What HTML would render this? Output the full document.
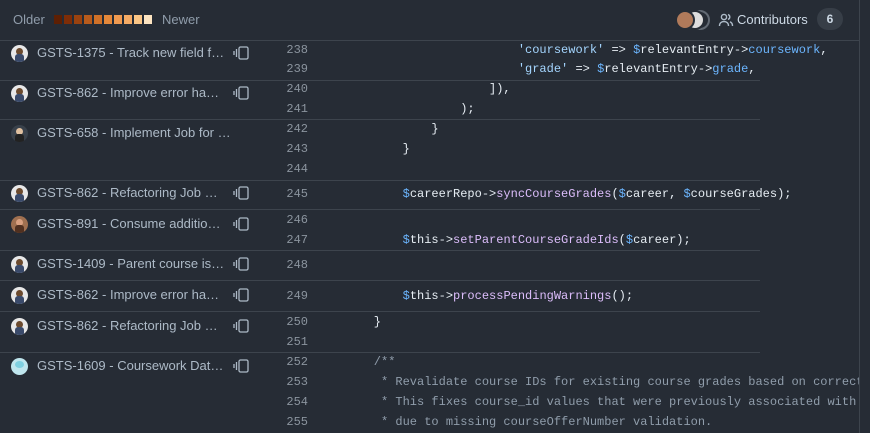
<!DOCTYPE html>
<html><head><meta charset="utf-8"><style>
*{margin:0;padding:0;box-sizing:border-box}
body{width:870px;height:433px;background:#262c35;overflow:hidden;position:relative;font-family:"Liberation Sans",sans-serif;color:#adbac7}
.abs{position:absolute}
.hdr{left:0;top:0;width:860px;height:41px;border-bottom:1px solid #3d444d}
.vl{left:859px;top:0;width:1px;height:433px;background:#3d444d}
.sq{position:absolute;top:15px;width:8px;height:9px}
.sep{position:absolute;left:0;width:760px;height:1px;background:#3d444d}
.bl{position:absolute;left:0;height:20px;font-size:13px;color:#adbac7;white-space:nowrap}
.av{position:absolute;left:11px;top:2px;width:17px;height:17px;border-radius:50%;background:#e8e8e8;overflow:hidden}
.av i{position:absolute;left:5px;top:3px;width:7px;height:7px;border-radius:50%;background:#6b4a2e}
.av b{position:absolute;left:4px;top:9px;width:9px;height:8px;background:#3a4a6a;border-radius:3px 3px 0 0}
.bt{position:absolute;left:37px;top:2px}
.ic{position:absolute;left:233px;top:3px}
.ln{position:absolute;left:262px;width:46px;text-align:right;font-family:"Liberation Mono",monospace;font-size:12px;color:#8b949e;height:20px;line-height:21px}
.cd{position:absolute;left:345px;font-family:"Liberation Mono",monospace;font-size:12px;white-space:pre;height:20px;line-height:21px;color:#e6edf3;width:514px;overflow:hidden}
.s{color:#a5d6ff}.v{color:#6cb6ff}.f{color:#dcbdfb}.c{color:#909dab}
</style></head><body>
<div class="abs hdr">
<span class="abs" style="left:13px;top:12px;font-size:13px;color:#909dab">Older</span>
<div class="sq" style="left:54px;background:#5d1f03"></div>
<div class="sq" style="left:64px;background:#7e2d07"></div>
<div class="sq" style="left:74px;background:#9a420f"></div>
<div class="sq" style="left:84px;background:#b85b1c"></div>
<div class="sq" style="left:94px;background:#d07128"></div>
<div class="sq" style="left:104px;background:#e5883a"></div>
<div class="sq" style="left:114px;background:#f09a50"></div>
<div class="sq" style="left:124px;background:#f5ab65"></div>
<div class="sq" style="left:134px;background:#fbc686"></div>
<div class="sq" style="left:144px;background:#fde4c1"></div>
<span class="abs" style="left:162px;top:12px;font-size:13px;color:#909dab">Newer</span>
<div class="abs" style="left:690px;top:10px;width:20px;height:20px;border-radius:50%;border:2px solid #8b949e;opacity:.6"></div>
<div class="abs" style="left:685px;top:10px;width:20px;height:20px;border-radius:50%;background:#ddd;border:2px solid #262c35"></div>
<div class="abs" style="left:675px;top:10px;width:20px;height:20px;border-radius:50%;background:#b07a5a;border:2px solid #262c35"></div>
<svg class="abs" style="left:718px;top:12px" width="16" height="16" viewBox="0 0 16 16" fill="none" stroke="#adbac7" stroke-width="1.4"><circle cx="6" cy="5" r="2.6"/><path d="M1.5 14c0-3 2-4.5 4.5-4.5S10.5 11 10.5 14"/><path d="M10 2.6a2.5 2.5 0 0 1 0 4.8M12 9.8c1.6.6 2.5 2 2.5 4.2"/></svg>
<span class="abs" style="left:737px;top:12px;font-size:13px;color:#cdd9e5">Contributors</span>
<div class="abs" style="left:817px;top:8px;width:26px;height:22px;border-radius:11px;background:#373e47;color:#cdd9e5;font-size:12px;font-weight:bold;text-align:center;line-height:22px">6</div>
</div>
<div class="vl abs"></div>

<div class="sep" style="top:80px"></div><div class="sep" style="top:119px"></div><div class="sep" style="top:180px"></div><div class="sep" style="top:209px"></div><div class="sep" style="top:250px"></div><div class="sep" style="top:280px"></div><div class="sep" style="top:311px"></div><div class="sep" style="top:352px"></div>

<div class="bl" style="top:43px"><div class="av"><i></i><b></b></div><span class="bt">GSTS-1375 - Track new field f…</span><svg class="ic" width="16" height="14" viewBox="0 0 16 14" fill="none" stroke="#adbac7" stroke-width="1.3"><path d="M1 5v4M3.5 3v8"/><rect x="6" y="1" width="9" height="12" rx="1.5"/></svg></div>
<div class="bl" style="top:83px"><div class="av"><i></i><b></b></div><span class="bt">GSTS-862 - Improve error ha…</span><svg class="ic" width="16" height="14" viewBox="0 0 16 14" fill="none" stroke="#adbac7" stroke-width="1.3"><path d="M1 5v4M3.5 3v8"/><rect x="6" y="1" width="9" height="12" rx="1.5"/></svg></div>
<div class="bl" style="top:123px"><div class="av" style="background:#39414b"><i style="background:#e0c0a0"></i><b style="background:#222"></b></div><span class="bt">GSTS-658 - Implement Job for …</span></div>
<div class="bl" style="top:183px"><div class="av"><i></i><b></b></div><span class="bt">GSTS-862 - Refactoring Job …</span><svg class="ic" width="16" height="14" viewBox="0 0 16 14" fill="none" stroke="#adbac7" stroke-width="1.3"><path d="M1 5v4M3.5 3v8"/><rect x="6" y="1" width="9" height="12" rx="1.5"/></svg></div>
<div class="bl" style="top:214px"><div class="av" style="background:#a07050"><i style="background:#d9a080"></i><b style="background:#503020"></b></div><span class="bt">GSTS-891 - Consume additio…</span><svg class="ic" width="16" height="14" viewBox="0 0 16 14" fill="none" stroke="#adbac7" stroke-width="1.3"><path d="M1 5v4M3.5 3v8"/><rect x="6" y="1" width="9" height="12" rx="1.5"/></svg></div>
<div class="bl" style="top:254px"><div class="av"><i></i><b></b></div><span class="bt">GSTS-1409 - Parent course is…</span><svg class="ic" width="16" height="14" viewBox="0 0 16 14" fill="none" stroke="#adbac7" stroke-width="1.3"><path d="M1 5v4M3.5 3v8"/><rect x="6" y="1" width="9" height="12" rx="1.5"/></svg></div>
<div class="bl" style="top:285px"><div class="av"><i></i><b></b></div><span class="bt">GSTS-862 - Improve error ha…</span><svg class="ic" width="16" height="14" viewBox="0 0 16 14" fill="none" stroke="#adbac7" stroke-width="1.3"><path d="M1 5v4M3.5 3v8"/><rect x="6" y="1" width="9" height="12" rx="1.5"/></svg></div>
<div class="bl" style="top:316px"><div class="av"><i></i><b></b></div><span class="bt">GSTS-862 - Refactoring Job …</span><svg class="ic" width="16" height="14" viewBox="0 0 16 14" fill="none" stroke="#adbac7" stroke-width="1.3"><path d="M1 5v4M3.5 3v8"/><rect x="6" y="1" width="9" height="12" rx="1.5"/></svg></div>
<div class="bl" style="top:356px"><div class="av" style="background:#bfe6ee"><i style="background:#7fd0e0;left:4px;width:9px"></i></div><span class="bt">GSTS-1609 - Coursework Dat…</span><svg class="ic" width="16" height="14" viewBox="0 0 16 14" fill="none" stroke="#adbac7" stroke-width="1.3"><path d="M1 5v4M3.5 3v8"/><rect x="6" y="1" width="9" height="12" rx="1.5"/></svg></div>

<div class="ln" style="top:40px">238</div><div class="cd" style="top:40px">                        <span class="s">'coursework'</span> =&gt; <span class="v">$</span>relevantEntry-&gt;<span class="v">coursework</span>,</div>
<div class="ln" style="top:59px">239</div><div class="cd" style="top:59px">                        <span class="s">'grade'</span> =&gt; <span class="v">$</span>relevantEntry-&gt;<span class="v">grade</span>,</div>
<div class="ln" style="top:79px">240</div><div class="cd" style="top:79px">                    ]),</div>
<div class="ln" style="top:99px">241</div><div class="cd" style="top:99px">                );</div>
<div class="ln" style="top:119px">242</div><div class="cd" style="top:119px">            }</div>
<div class="ln" style="top:139px">243</div><div class="cd" style="top:139px">        }</div>
<div class="ln" style="top:159px">244</div>
<div class="ln" style="top:184px">245</div><div class="cd" style="top:184px">        <span class="v">$</span>careerRepo-&gt;<span class="f">syncCourseGrades</span>(<span class="v">$</span>career, <span class="v">$</span>courseGrades);</div>
<div class="ln" style="top:210px">246</div>
<div class="ln" style="top:230px">247</div><div class="cd" style="top:230px">        <span class="v">$</span>this-&gt;<span class="f">setParentCourseGradeIds</span>(<span class="v">$</span>career);</div>
<div class="ln" style="top:255px">248</div>
<div class="ln" style="top:286px">249</div><div class="cd" style="top:286px">        <span class="v">$</span>this-&gt;<span class="f">processPendingWarnings</span>();</div>
<div class="ln" style="top:312px">250</div><div class="cd" style="top:312px">    }</div>
<div class="ln" style="top:332px">251</div>
<div class="ln" style="top:352px">252</div><div class="cd c" style="top:352px">    /**</div>
<div class="ln" style="top:372px">253</div><div class="cd c" style="top:372px">     * Revalidate course IDs for existing course grades based on correct</div>
<div class="ln" style="top:392px">254</div><div class="cd c" style="top:392px">     * This fixes course_id values that were previously associated with</div>
<div class="ln" style="top:412px">255</div><div class="cd c" style="top:412px">     * due to missing courseOfferNumber validation.</div>
</body></html>
